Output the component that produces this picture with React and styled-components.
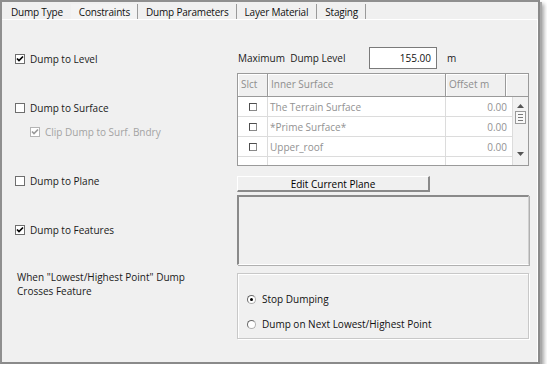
import styled, { createGlobalStyle } from "styled-components";

const GlobalStyle = createGlobalStyle`
  html, body {
    margin: 0;
    padding: 0;
    background: #ffffff;
  }
  body {
    font-family: "Open Sans", "Noto Sans", sans-serif;
    font-size: 10px;
    color: #1a1a1a;
  }
`;

const Window = styled.div`
  box-sizing: border-box;
  width: 540px;
  height: 364px;
  background: #f0f0f0;
  border-top: 2px solid #8f8f8f;
  border-left: 2px solid #8f8f8f;
  border-right: 2px solid #8a8a8a;
  border-bottom: 2px solid #8a8a8a;
  box-shadow: 2px 2px 0 #a8a8a8, 4px 4px 4px rgba(0, 0, 0, 0.35);
  display: flex;
  flex-direction: column;
`;

const TabStrip = styled.div`
  height: 17px;
  display: flex;
  align-items: stretch;
  border-bottom: 1px solid #ffffff;
`;

const Tab = styled.div`
  display: flex;
  align-items: center;
  padding: 0 ${(p) => p.$right}px 0 ${(p) => p.$left}px;
  border-right: ${(p) => (p.$sep ? "1px solid #9a9a9a" : "none")};
  margin-top: 2px;
  color: #111;
  letter-spacing: -0.2px;
  white-space: nowrap;
  background: ${(p) => (p.$active ? "#f3f3f3" : "transparent")};
`;

const Page = styled.div`
  flex: 1;
  display: grid;
  grid-template-columns: 235px 292px;
  border-right: 1px solid #ffffff;
`;

const LeftCol = styled.div`
  display: flex;
  flex-direction: column;
  padding-left: 13px;
`;

const RightCol = styled.div`
  display: flex;
  flex-direction: column;
`;

const CheckRow = styled.label`
  display: flex;
  align-items: center;
  height: 16px;
  gap: 5px;
  margin-top: ${(p) => p.$top}px;
  padding-left: ${(p) => p.$indent || 0}px;
  color: ${(p) => (p.$disabled ? "#a3a3a3" : "#1a1a1a")};
`;

const Box = styled.span`
  box-sizing: border-box;
  width: ${(p) => p.$size}px;
  height: ${(p) => p.$size}px;
  border: 1px solid ${(p) => (p.$disabled ? "#b4b4b4" : "#6e6e6e")};
  background: #ffffff;
  display: inline-flex;
  align-items: center;
  justify-content: center;
  flex: none;
`;

const Note = styled.div`
  margin-top: ${(p) => p.$top}px;
  padding-left: 2px;
  line-height: 14px;
  color: #1a1a1a;
`;

const MaxRow = styled.div`
  display: flex;
  align-items: center;
  margin-top: 27px;
  height: 22px;
`;

const MaxLabel = styled.span`
  width: 131px;
  padding-left: 1px;
  white-space: pre;
`;

const NumberBox = styled.div`
  box-sizing: border-box;
  width: 68px;
  height: 22px;
  border: 1px solid #7a7a7a;
  background: #ffffff;
  display: flex;
  align-items: center;
  justify-content: flex-end;
  padding-right: 5px;
  color: #111;
`;

const Unit = styled.span`
  margin-left: 10px;
`;

const Table = styled.div`
  box-sizing: border-box;
  margin-top: 4px;
  width: 292px;
  height: 93px;
  border: 1px solid #9a9a9a;
  display: flex;
  flex-direction: column;
  overflow: hidden;
`;

const HeaderRow = styled.div`
  display: grid;
  grid-template-columns: 30px 178px 60px 1fr;
  height: 23px;
  border-bottom: 1px solid #9a9a9a;
  box-sizing: border-box;
`;

const HeadCell = styled.div`
  padding: 3px 0 0 3px;
  color: #8e8e8e;
  border-right: ${(p) => (p.$last ? "none" : "1px solid #9a9a9a")};
  box-shadow: inset 1px 1px 0 #ffffff;
  white-space: nowrap;
`;

const TableBody = styled.div`
  flex: 1;
  display: flex;
  overflow: hidden;
`;

const Rows = styled.div`
  width: 275px;
  background: #ffffff;
`;

const Row = styled.div`
  display: grid;
  grid-template-columns: 30px 178px 67px;
  height: 20px;
  box-sizing: border-box;
  border-bottom: 1px solid #dcdcdc;
`;

const Cell = styled.div`
  display: flex;
  align-items: center;
  justify-content: ${(p) => p.$align || "flex-start"};
  padding: 0 ${(p) => (p.$align === "flex-end" ? 5 : 2)}px 0 2px;
  color: #929292;
  border-right: 1px solid #dcdcdc;
  white-space: nowrap;
`;

const SmallBox = styled.span`
  box-sizing: border-box;
  width: 8px;
  height: 8px;
  margin-left: 9px;
  border: 1px solid #8a8a8a;
  border-top-color: #4e4e4e;
  border-left-color: #4e4e4e;
  background: #ffffff;
`;

const ScrollBar = styled.div`
  flex: 1;
  background: #f2f2f2;
  display: flex;
  flex-direction: column;
  align-items: center;
  padding-top: 7px;
`;

const Thumb = styled.div`
  box-sizing: border-box;
  width: 11px;
  height: 13px;
  margin-top: 3px;
  border: 1px solid #9a9a9a;
  background: #f8f8f8;
  display: flex;
  flex-direction: column;
  justify-content: center;
  align-items: center;
  gap: 2px;
`;

const Grip = styled.span`
  width: 5px;
  height: 1px;
  background: #7a7a7a;
`;

const DownArrow = styled.div`
  margin-top: auto;
  margin-bottom: 6px;
`;

const PlaneButton = styled.div`
  box-sizing: border-box;
  margin-top: 10px;
  width: 193px;
  height: 16px;
  background: #f0f0f0;
  border-top: 1px solid #ffffff;
  border-left: 1px solid #ffffff;
  border-right: 2px solid #8a8a8a;
  border-bottom: 2px solid #8a8a8a;
  display: flex;
  align-items: center;
  justify-content: center;
  color: #000;
`;

const SunkenBox = styled.div`
  box-sizing: border-box;
  margin-top: 3px;
  width: 292px;
  height: 70px;
  border-top: 2px solid #8a8a8a;
  border-left: 2px solid #8a8a8a;
  border-right: 1px solid #d0d0d0;
  border-bottom: 1px solid #ffffff;
  box-shadow: 1px 1px 0 #b0b0b0;
`;

const Group = styled.div`
  box-sizing: border-box;
  margin-top: 8px;
  width: 292px;
  height: 66px;
  border: 1px solid #c8c8c8;
  box-shadow: inset 1px 1px 0 #ffffff, 1px 1px 0 #ffffff;
  display: flex;
  flex-direction: column;
  padding: 17px 0 0 9px;
  gap: 9px;
`;

const RadioRow = styled.label`
  display: flex;
  align-items: center;
  height: 16px;
  gap: 6px;
  color: #111;
`;

const RadioDot = styled.span`
  box-sizing: border-box;
  width: 9px;
  height: 9px;
  border-radius: 50%;
  border: 1px solid #b0b0b0;
  border-top-color: #6a6a6a;
  border-left-color: #6a6a6a;
  background: #ffffff;
  display: inline-flex;
  align-items: center;
  justify-content: center;
  &::after {
    content: "";
    width: 3px;
    height: 3px;
    border-radius: 50%;
    background: ${(p) => (p.$on ? "#000" : "transparent")};
  }
`;

const Tick = ({ color = "#000" }) => (
  <svg width="8" height="8" viewBox="0 0 8 8">
    <path d="M1 3.5 L3 5.5 L7 1.5" fill="none" stroke={color} strokeWidth="1.7" />
  </svg>
);

const Check = ({ checked, disabled, top, indent, children }) => (
  <CheckRow $top={top} $indent={indent} $disabled={disabled}>
    <Box $size={10} $disabled={disabled}>
      {checked && <Tick color={disabled ? "#9a9a9a" : "#000"} />}
    </Box>
    {children}
  </CheckRow>
);

const rows = [
  ["The Terrain Surface", "0.00"],
  ["*Prime Surface*", "0.00"],
  ["Upper_roof", "0.00"],
  ["", ""],
];

export default function App() {
  return (
    <>
      <GlobalStyle />
      <Window>
        <TabStrip>
          <Tab $left={9} $right={8}>Dump Type</Tab>
          <Tab $left={8} $right={7} $sep $active>Constraints</Tab>
          <Tab $left={8} $right={7} $sep>Dump Parameters</Tab>
          <Tab $left={8} $right={8} $sep>Layer Material</Tab>
          <Tab $left={8} $right={7} $sep>Staging</Tab>
        </TabStrip>
        <Page>
          <LeftCol>
            <Check checked top={31}>Dump to Level</Check>
            <Check top={33}>Dump to Surface</Check>
            <Check checked disabled top={8} indent={15}>
              Clip Dump to Surf. Bndry
            </Check>
            <Check top={33}>Dump to Plane</Check>
            <Check checked top={33}>Dump to Features</Check>
            <Note $top={32}>
              When "Lowest/Highest Point" Dump
              <br />
              Crosses Feature
            </Note>
          </LeftCol>
          <RightCol>
            <MaxRow>
              <MaxLabel>Maximum  Dump Level</MaxLabel>
              <NumberBox>155.00</NumberBox>
              <Unit>m</Unit>
            </MaxRow>
            <Table>
              <HeaderRow>
                <HeadCell>Slct</HeadCell>
                <HeadCell>Inner Surface</HeadCell>
                <HeadCell>Offset m</HeadCell>
                <HeadCell $last />
              </HeaderRow>
              <TableBody>
                <Rows>
                  {rows.map(([name, off], i) => (
                    <Row key={i}>
                      <Cell>{name && <SmallBox />}</Cell>
                      <Cell>{name}</Cell>
                      <Cell $align="flex-end">{off}</Cell>
                    </Row>
                  ))}
                </Rows>
                <ScrollBar>
                  <svg width="7" height="4" viewBox="0 0 7 4">
                    <path d="M0 4 L3.5 0 L7 4 Z" fill="#555" />
                  </svg>
                  <Thumb>
                    <Grip />
                    <Grip />
                    <Grip />
                  </Thumb>
                  <DownArrow>
                    <svg width="7" height="4" viewBox="0 0 7 4">
                      <path d="M0 0 L3.5 4 L7 0 Z" fill="#555" />
                    </svg>
                  </DownArrow>
                </ScrollBar>
              </TableBody>
            </Table>
            <PlaneButton>Edit Current Plane</PlaneButton>
            <SunkenBox />
            <Group>
              <RadioRow>
                <RadioDot $on />
                Stop Dumping
              </RadioRow>
              <RadioRow>
                <RadioDot />
                Dump on Next Lowest/Highest Point
              </RadioRow>
            </Group>
          </RightCol>
        </Page>
      </Window>
    </>
  );
}
